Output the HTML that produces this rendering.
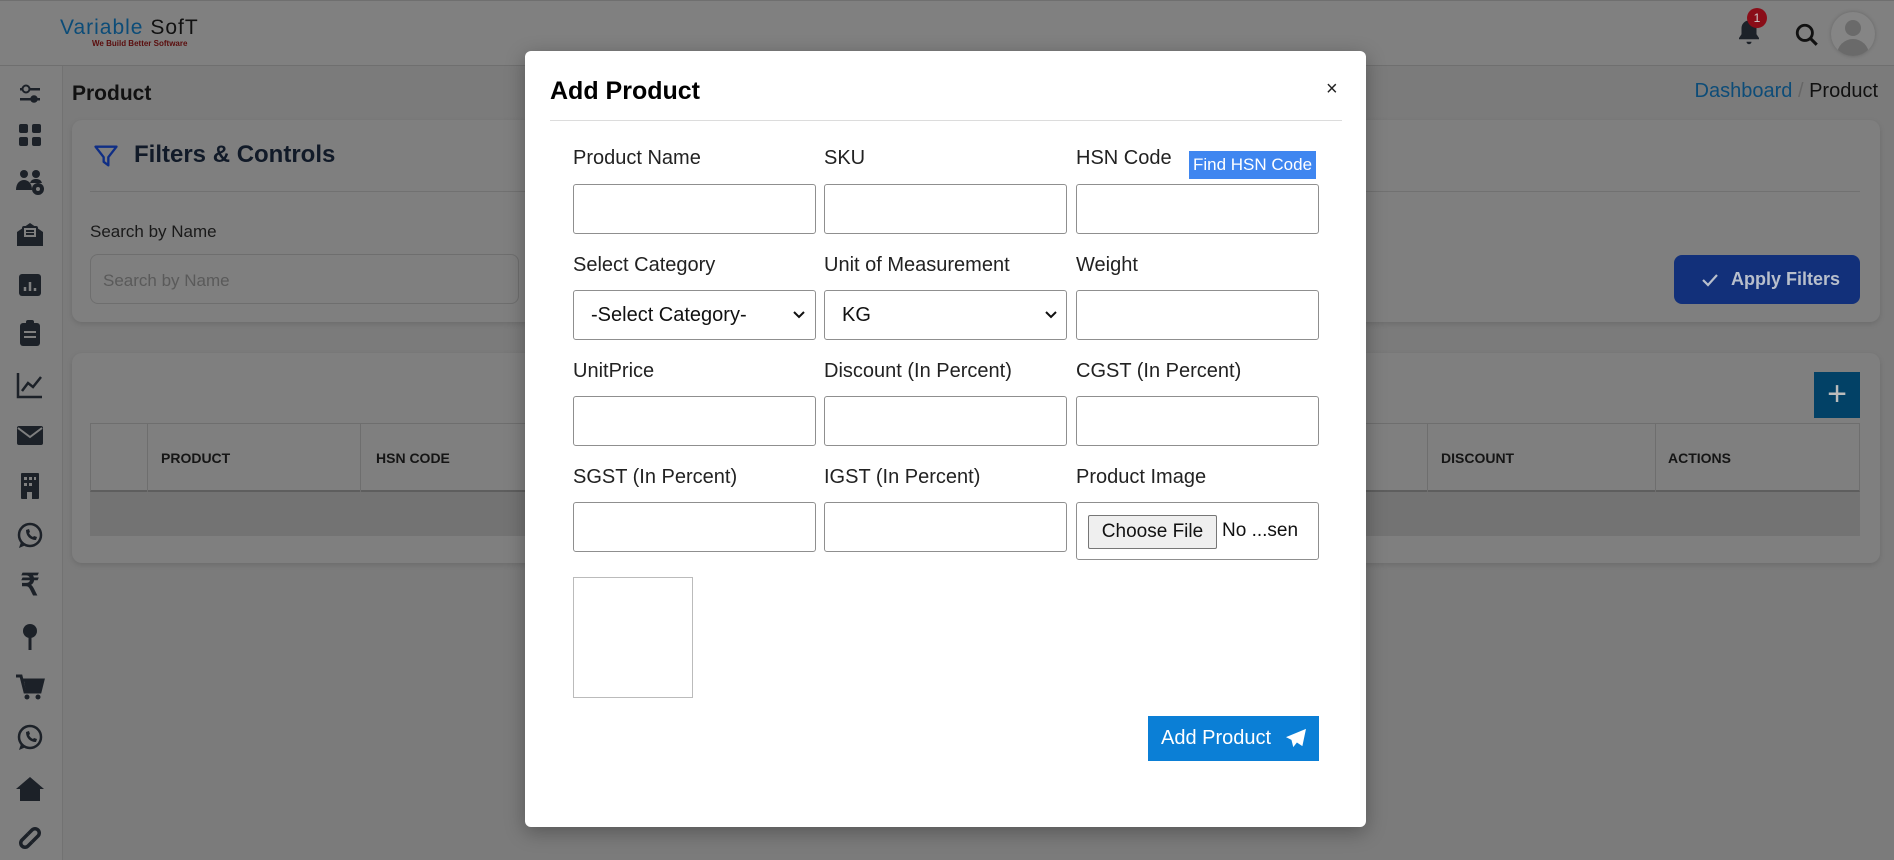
<!DOCTYPE html>
<html><head><meta charset="utf-8"><style>
*{box-sizing:border-box;margin:0;padding:0}
body{width:1894px;height:860px;overflow:hidden;background:#7b7b7b;font-family:"Liberation Sans",sans-serif;position:relative}
.abs{position:absolute}
.hdr{left:0;top:0;width:1894px;height:66px;background:#808080;border-bottom:1px solid #6f6f6f;border-top:1px solid #6f6f6f}
.side{left:0;top:66px;width:63px;height:794px;background:#7f7f7f;border-right:1px solid #727272}
.card{background:#7f7f7f;border-radius:10px;box-shadow:0 2px 6px rgba(0,0,0,.12)}
.th{font-size:14px;font-weight:bold;color:#151515;top:450px}
.modal{left:525px;top:51px;width:841px;height:776px;background:#fff;border-radius:6px;box-shadow:0 5px 20px rgba(0,0,0,.3)}
.lbl{font-size:20px;color:#222}
.inp{width:243px;height:50px;border:1px solid #8f8f8f;border-radius:3px;background:#fff}
.sel{font-size:20px;color:#111;padding-left:17px;line-height:48px}
.ic{fill:#1c2128}
.si{position:absolute;left:15px;width:30px;height:30px}
</style></head><body>
<div class="abs hdr"></div>
<div class="abs" style="left:60px;top:16px;font-size:21px;letter-spacing:1px;color:#0c4c78">Variable <span style="color:#111">SofT</span></div>
<div class="abs" style="left:92px;top:39px;font-size:8px;color:#5a0c0c;font-weight:bold">We Build Better Software</div>
<svg class="abs" style="left:1734px;top:18px" width="30" height="30" viewBox="0 0 24 24"><path class="ic" d="M12 2a6 6 0 0 0-6 6v5l-2 3v1h16v-1l-2-3V8a6 6 0 0 0-6-6zM10 19a2 2 0 0 0 4 0z"/></svg>
<div class="abs" style="left:1747px;top:8px;width:20px;height:20px;border-radius:50%;background:#8a0d18;color:#ccc;font-size:12px;text-align:center;line-height:20px">1</div>
<svg class="abs" style="left:1794px;top:22px" width="26" height="26" viewBox="0 0 24 24"><circle cx="10" cy="10" r="7" fill="none" stroke="#111" stroke-width="2.6"/><path d="M15 15l6 6" stroke="#111" stroke-width="2.8"/></svg>
<div class="abs" style="left:1831px;top:12px;width:44px;height:44px;border-radius:50%;background:#858585;box-shadow:0 0 4px rgba(0,0,0,.2);overflow:hidden"><div class="abs" style="left:14px;top:8px;width:16px;height:16px;border-radius:50%;background:#6a6a6a"></div><div class="abs" style="left:6px;top:27px;width:32px;height:20px;border-radius:16px 16px 0 0;background:#6a6a6a"></div></div>
<div class="abs side"></div>

<svg class="si" style="top:79px" viewBox="0 0 30 30"><rect x="5" y="9" width="20" height="2.5" class="ic"/><circle cx="11" cy="10" r="3.5" fill="#7f7f7f" stroke="#1c2128" stroke-width="2"/><rect x="5" y="19" width="20" height="2.5" class="ic"/><circle cx="19" cy="20" r="3.8" class="ic"/></svg>
<svg class="si" style="top:120px" viewBox="0 0 30 30" class="ic"><g class="ic"><rect x="4" y="4" width="9" height="9" rx="2"/><rect x="17" y="4" width="9" height="9" rx="2"/><rect x="4" y="17" width="9" height="9" rx="2"/><rect x="17" y="17" width="9" height="9" rx="2"/></g></svg>
<svg class="si" style="top:167px" viewBox="0 0 30 30"><g class="ic"><circle cx="9" cy="7" r="4"/><circle cx="21" cy="7" r="4"/><path d="M1 23c0-7 4-10 8-10s8 3 8 10z"/><path d="M15 16c1-3 3-4 6-4 3 0 5 1 6 4z"/><circle cx="23" cy="22" r="6"/></g><circle cx="23" cy="22" r="2" fill="#7f7f7f"/></svg>
<svg class="si" style="top:219px" viewBox="0 0 30 30"><g class="ic"><path d="M2 13l13-9 13 9v14H2z"/></g><rect x="8" y="8" width="14" height="11" rx="1" fill="#7f7f7f" stroke="#1c2128" stroke-width="2"/><path d="M11 12h8M11 15h8" stroke="#1c2128" stroke-width="2"/></svg>
<svg class="si" style="top:270px" viewBox="0 0 30 30"><rect x="4" y="4" width="22" height="22" rx="3" class="ic"/><path d="M10 21v-4M15 21v-9M20 21v-3" stroke="#7f7f7f" stroke-width="2.5"/></svg>
<svg class="si" style="top:318px" viewBox="0 0 30 30"><rect x="5" y="5" width="20" height="23" rx="3" class="ic"/><rect x="11" y="2" width="8" height="6" rx="2" class="ic"/><path d="M9 14h12M9 19h12" stroke="#7f7f7f" stroke-width="2"/></svg>
<svg class="si" style="top:370px" viewBox="0 0 30 30"><path d="M3 3v24h24" fill="none" stroke="#1c2128" stroke-width="2.5"/><path d="M7 21l6-8 5 4 8-10" fill="none" stroke="#1c2128" stroke-width="2.5"/></svg>
<svg class="si" style="top:420px" viewBox="0 0 30 30"><rect x="2" y="6" width="26" height="19" rx="2" class="ic"/><path d="M3 8l12 9 12-9" fill="none" stroke="#7f7f7f" stroke-width="2"/></svg>
<svg class="si" style="top:471px" viewBox="0 0 30 30"><rect x="6" y="2" width="18" height="26" rx="1" class="ic"/><g fill="#7f7f7f"><rect x="9" y="6" width="3" height="3"/><rect x="14" y="6" width="3" height="3"/><rect x="19" y="6" width="2" height="3"/><rect x="9" y="12" width="3" height="3"/><rect x="14" y="12" width="3" height="3"/><rect x="12" y="21" width="5" height="7"/></g></svg>
<svg class="si" style="top:521px" viewBox="0 0 30 30"><circle cx="15" cy="14" r="11" fill="none" stroke="#1c2128" stroke-width="2.5"/><path d="M4 27l2-6 5 3z" class="ic"/><path d="M11 9c0 6 4 10 10 10l1-3-3-1-1 1c-2-1-3-2-4-4l1-1-1-3z" class="ic"/></svg>
<div class="abs" style="left:14px;top:568px;width:32px;text-align:center;font-size:30px;font-weight:bold;color:#1c2128;line-height:36px">₹</div>
<svg class="si" style="top:622px" viewBox="0 0 30 30"><circle cx="15" cy="9" r="7" class="ic"/><rect x="13.5" y="14" width="3" height="14" class="ic"/></svg>
<svg class="si" style="top:672px" viewBox="0 0 30 30"><path d="M1 4h5l4 16h15l3-12H8" fill="none" stroke="#1c2128" stroke-width="3"/><path d="M9 9h18l-3 10H11z" class="ic"/><circle cx="12" cy="25" r="2.5" class="ic"/><circle cx="23" cy="25" r="2.5" class="ic"/></svg>
<svg class="si" style="top:723px" viewBox="0 0 30 30"><circle cx="15" cy="14" r="11" fill="none" stroke="#1c2128" stroke-width="2.5"/><path d="M4 27l2-6 5 3z" class="ic"/><path d="M11 9c0 6 4 10 10 10l1-3-3-1-1 1c-2-1-3-2-4-4l1-1-1-3z" class="ic"/></svg>
<svg class="si" style="top:774px" viewBox="0 0 30 30"><path d="M1 15l14-12 14 12h-4v12H5V15z" class="ic"/></svg>
<svg class="si" style="top:823px" viewBox="0 0 30 30"><g fill="none" stroke="#1c2128" stroke-width="3.5"><path d="M13 11l-6 6a4 4 0 0 0 6 6l4-4"/><path d="M17 19l6-6a4 4 0 0 0-6-6l-4 4"/></g></svg>

<div class="abs" style="left:72px;top:82px;font-size:21px;font-weight:bold;color:#111">Product</div>
<div class="abs" style="right:16px;top:80px;font-size:20px;color:#111"><span style="color:#0d4c78">Dashboard</span> <span style="color:#666">/</span> Product</div>
<div class="abs card" style="left:72px;top:120px;width:1808px;height:202px"></div>
<svg class="abs" style="left:92px;top:142px" width="28" height="28" viewBox="0 0 24 24"><path d="M3 4h18l-7 9v7l-4-3v-4z" fill="none" stroke="#0f2e85" stroke-width="2" stroke-linejoin="round"/></svg>
<div class="abs" style="left:134px;top:141px;font-size:24px;font-weight:bold;color:#111a28">Filters &amp; Controls</div>
<div class="abs" style="left:90px;top:191px;width:1770px;height:1px;background:#717171"></div>
<div class="abs" style="left:90px;top:222px;font-size:17px;color:#1a1a1a">Search by Name</div>
<div class="abs" style="left:90px;top:254px;width:429px;height:50px;border:1px solid #6e6e6e;border-radius:8px;font-size:17px;color:#5a5a5a;padding:16px 12px">Search by Name</div>
<div class="abs" style="left:1674px;top:255px;width:186px;height:49px;background:#12307a;border-radius:8px;color:#b8bfcc;font-size:18px;font-weight:bold;line-height:49px;padding-left:57px">Apply Filters</div>
<svg class="abs" style="left:1700px;top:270px" width="20" height="20" viewBox="0 0 20 20"><path d="M3 10l5 5 9-10" fill="none" stroke="#b8bfcc" stroke-width="2.2"/></svg>
<div class="abs card" style="left:72px;top:353px;width:1808px;height:210px"></div>
<div class="abs" style="left:1814px;top:372px;width:46px;height:46px;background:#024166;color:#bbb;font-size:34px;text-align:center;line-height:44px">+</div>
<div class="abs" style="left:90px;top:423px;width:1770px;height:69px;border:1px solid #6e6e6e;border-bottom:2px solid #5e5e5e"></div>
<div class="abs" style="left:147px;top:423px;width:1px;height:69px;background:#6e6e6e"></div>
<div class="abs" style="left:360px;top:423px;width:1px;height:69px;background:#6e6e6e"></div>
<div class="abs" style="left:1427px;top:423px;width:1px;height:69px;background:#6e6e6e"></div>
<div class="abs" style="left:1655px;top:423px;width:1px;height:69px;background:#6e6e6e"></div>
<div class="abs th" style="left:161px">PRODUCT</div>
<div class="abs th" style="left:376px">HSN CODE</div>
<div class="abs th" style="left:1441px">DISCOUNT</div>
<div class="abs th" style="left:1668px">ACTIONS</div>
<div class="abs" style="left:90px;top:492px;width:1770px;height:44px;background:#737373"></div>

<div class="abs modal"></div>
<div class="abs" style="left:550px;top:77px;font-size:25px;font-weight:bold;color:#000">Add Product</div>
<div class="abs" style="left:1326px;top:78px;font-size:20px;color:#222">×</div>
<div class="abs" style="left:550px;top:120px;width:792px;height:1px;background:#dcdcdc"></div>

<div class="abs lbl" style="left:573px;top:147px">Product Name</div>
<div class="abs lbl" style="left:824px;top:147px">SKU</div>
<div class="abs lbl" style="left:1076px;top:147px">HSN Code</div>
<div class="abs" style="left:1189px;top:151px;width:127px;height:28px;background:#3f86f0;color:#fff;font-size:17px;line-height:28px;text-align:center">Find HSN Code</div>
<div class="abs inp" style="left:573px;top:184px"></div>
<div class="abs inp" style="left:824px;top:184px"></div>
<div class="abs inp" style="left:1076px;top:184px"></div>

<div class="abs lbl" style="left:573px;top:254px">Select Category</div>
<div class="abs lbl" style="left:824px;top:254px">Unit of Measurement</div>
<div class="abs lbl" style="left:1076px;top:254px">Weight</div>
<div class="abs inp sel" style="left:573px;top:290px">-Select Category-</div>
<div class="abs inp sel" style="left:824px;top:290px">KG</div>
<svg class="abs" style="left:793px;top:310px" width="12" height="10" viewBox="0 0 12 10"><path d="M1 2l5 5 5-5" fill="none" stroke="#111" stroke-width="2"/></svg>
<svg class="abs" style="left:1045px;top:310px" width="12" height="10" viewBox="0 0 12 10"><path d="M1 2l5 5 5-5" fill="none" stroke="#111" stroke-width="2"/></svg>
<div class="abs inp" style="left:1076px;top:290px"></div>

<div class="abs lbl" style="left:573px;top:360px">UnitPrice</div>
<div class="abs lbl" style="left:824px;top:360px">Discount (In Percent)</div>
<div class="abs lbl" style="left:1076px;top:360px">CGST (In Percent)</div>
<div class="abs inp" style="left:573px;top:396px"></div>
<div class="abs inp" style="left:824px;top:396px"></div>
<div class="abs inp" style="left:1076px;top:396px"></div>

<div class="abs lbl" style="left:573px;top:466px">SGST (In Percent)</div>
<div class="abs lbl" style="left:824px;top:466px">IGST (In Percent)</div>
<div class="abs lbl" style="left:1076px;top:466px">Product Image</div>
<div class="abs inp" style="left:573px;top:502px"></div>
<div class="abs inp" style="left:824px;top:502px"></div>
<div class="abs inp" style="left:1076px;top:502px;height:58px"></div>
<div class="abs" style="left:1088px;top:515px;width:129px;height:34px;background:#efefef;border:1px solid #767676;border-radius:2px;font-size:19px;line-height:32px;text-align:center;color:#111">Choose File</div>
<div class="abs" style="left:1222px;top:520px;font-size:19px;color:#111">No ...sen</div>

<div class="abs" style="left:573px;top:577px;width:120px;height:121px;border:1px solid #bbb"></div>
<div class="abs" style="left:1148px;top:716px;width:171px;height:45px;background:#0b7fd6;color:#fff;font-size:20px;line-height:45px;padding-left:13px">Add Product</div>
<svg class="abs" style="left:1285px;top:728px" width="22" height="20" viewBox="0 0 24 22"><path d="M23 1L1 10l6 3 2 8 4-5 6 4z" fill="#fff"/></svg>
</body></html>
